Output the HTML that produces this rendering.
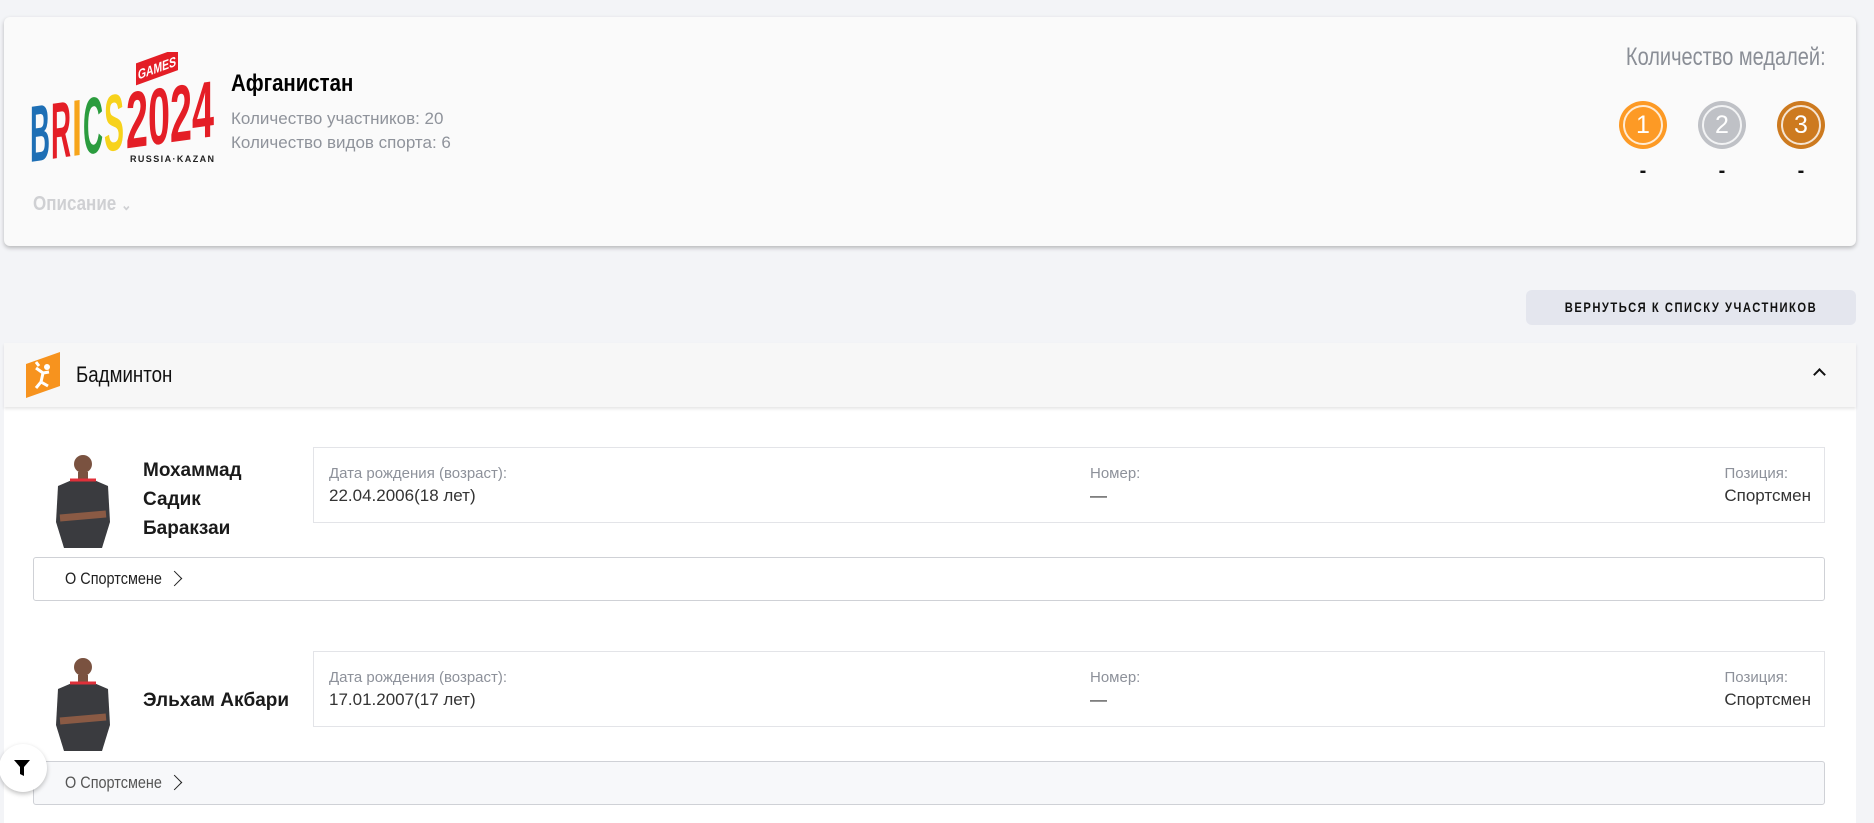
<!DOCTYPE html>
<html><head><meta charset="utf-8"><style>
*{margin:0;padding:0;box-sizing:border-box}
body{width:1874px;height:823px;overflow:hidden;background:#f3f4f7;font-family:"Liberation Sans",sans-serif;position:relative}
.abs{position:absolute}
.nar{font-family:"Liberation Sans Narrow","Liberation Sans",sans-serif;transform:scaleX(.85);transform-origin:left center;white-space:nowrap}
.card{left:4px;top:17px;width:1852px;height:229px;background:#fafafa;border-radius:6px;box-shadow:0 2px 4px rgba(0,0,0,.25)}
.medal{width:48px;height:48px;border-radius:50%;top:101px;color:#fff;font-size:25px;text-align:center;line-height:48px}
.medal:after{content:"";position:absolute;left:4px;top:4px;width:36px;height:36px;border:2px solid rgba(255,255,255,.8);border-radius:50%}
.dash{top:160px;font-weight:bold;font-size:20px;width:48px;text-align:center;color:#111}
.lbl{font-size:15px;color:#8d919a}
.val{font-size:17px;color:#333}
.box{border:1px solid #e3e4e8;background:#fff}
.about{border:1px solid #cfd1d6;border-radius:3px;height:44px}
.name{font-weight:bold;font-size:19px;color:#1a1a1a;line-height:29px}
</style></head><body>
<div class="abs card"></div>
<svg class="abs" style="left:30px;top:52px" width="186" height="114" viewBox="0 0 186 114">
<g font-family="Liberation Sans Narrow,Liberation Sans,sans-serif" font-weight="bold" font-size="80" transform="skewY(-8)">
<text x="0" y="110" fill="#1e6fb5" textLength="20" lengthAdjust="spacingAndGlyphs">B</text>
<text x="21" y="110" fill="#e41e26" textLength="20" lengthAdjust="spacingAndGlyphs">R</text>
<text x="42" y="110" fill="#f7a51b" textLength="10" lengthAdjust="spacingAndGlyphs">I</text>
<text x="53" y="110" fill="#2b9c3e" textLength="20" lengthAdjust="spacingAndGlyphs">C</text>
<text x="74" y="110" fill="#f7d21b" textLength="20" lengthAdjust="spacingAndGlyphs">S</text>
<text x="96" y="110" fill="#e41e26" textLength="88" lengthAdjust="spacingAndGlyphs">2024</text>
</g>
<g transform="skewY(-20)"><rect x="106" y="50" width="42" height="22" fill="#e41e26"/><text x="108" y="67" font-family="Liberation Sans,sans-serif" font-weight="bold" font-size="14" fill="#fff" textLength="38" lengthAdjust="spacingAndGlyphs">GAMES</text></g>
<text x="100" y="110" font-size="9" font-weight="bold" fill="#222" textLength="84" lengthAdjust="spacing">RUSSIA·KAZAN</text>
</svg>
<div class="abs nar" style="left:231px;top:70px;font-size:24px;font-weight:bold;color:#000">Афганистан</div>
<div class="abs" style="left:231px;top:107px;font-size:17px;color:#8f939b;line-height:24px">Количество участников: 20<br>Количество видов спорта: 6</div>
<div class="abs nar" style="left:33px;top:193px;font-size:20px;font-weight:bold;color:#cfd0d3">Описание <span style="font-size:15px">&#8964;</span></div>
<div class="abs nar" style="right:48px;top:43px;font-size:25px;color:#8a8e96;transform:scaleX(.8);transform-origin:right center">Количество медалей:</div>
<div class="abs medal" style="left:1619px;background:#fd9a25"><span style="position:relative">1</span></div>
<div class="abs medal" style="left:1698px;background:#bfc1c6"><span style="position:relative">2</span></div>
<div class="abs medal" style="left:1777px;background:#cd7a1f"><span style="position:relative">3</span></div>
<div class="abs dash" style="left:1619px">-</div><div class="abs dash" style="left:1698px">-</div><div class="abs dash" style="left:1777px">-</div>

<div class="abs" style="left:1526px;top:290px;width:330px;height:35px;background:#e4e6ee;border-radius:6px"></div>
<div class="abs" style="left:1526px;top:290px;width:330px;height:35px;font-size:14px;font-weight:bold;letter-spacing:1.9px;text-align:center;line-height:35px;color:#111;transform:scaleX(.8);white-space:nowrap">ВЕРНУТЬСЯ К СПИСКУ УЧАСТНИКОВ</div>

<div class="abs" style="left:4px;top:343px;width:1852px;height:480px;background:#fff"></div>
<div class="abs" style="left:4px;top:343px;width:1852px;height:64px;background:#f7f7f7;box-shadow:0 2px 3px rgba(0,0,0,.1)"></div>
<svg class="abs" style="left:26px;top:352px" width="34" height="46"><polygon points="0,12 34,0 34,34 0,46" fill="#f7931e"/><circle cx="21" cy="15" r="3" fill="#fff"/><path d="M10 16 L17 21 L23 20 M17 21 L15 30 L10 36 M15 30 L22 34 M10 10 l3 4" stroke="#fff" stroke-width="3" fill="none"/></svg>
<div class="abs nar" style="left:76px;top:362px;font-size:22px;color:#111">Бадминтон</div>
<div class="abs" style="left:1815px;top:370px;width:9px;height:9px;border-left:2px solid #111;border-top:2px solid #111;transform:rotate(45deg)"></div>

<!-- athlete 1 -->
<svg class="abs" style="left:52px;top:452px" width="62" height="96"><circle cx="31" cy="12" r="9" fill="#7a5240"/><path d="M26 20h10v10H26z" fill="#7a5240"/><path d="M6 34 L20 28 L42 28 L56 34 L58 70 L50 96 L12 96 L4 70Z" fill="#3a3b3f"/><path d="M18 28h26" stroke="#e0303a" stroke-width="3"/><path d="M8 66 L54 62" stroke="#8a5a44" stroke-width="7"/></svg>
<div class="abs name" style="left:143px;top:456px">Мохаммад<br>Садик<br>Баракзаи</div>
<div class="abs box" style="left:313px;top:447px;width:1512px;height:76px"></div>
<div class="abs lbl" style="left:329px;top:465px">Дата рождения (возраст):</div>
<div class="abs val" style="left:329px;top:486px">22.04.2006(18 лет)</div>
<div class="abs lbl" style="left:1090px;top:465px">Номер:</div>
<div class="abs val" style="left:1090px;top:486px">—</div>
<div class="abs lbl" style="right:86px;top:465px">Позиция:</div>
<div class="abs val" style="right:63px;top:486px">Спортсмен</div>
<div class="abs about" style="left:33px;top:557px;width:1792px;background:#fff"></div>
<div class="abs nar" style="left:65px;top:569px;font-size:17px;color:#222">О Спортсмене</div>
<div class="abs" style="left:169px;top:573px;width:11px;height:11px;border-right:1.5px solid #222;border-top:1.5px solid #222;transform:rotate(45deg)"></div>

<!-- athlete 2 -->
<svg class="abs" style="left:52px;top:655px" width="62" height="96"><circle cx="31" cy="12" r="9" fill="#7a5240"/><path d="M26 20h10v10H26z" fill="#7a5240"/><path d="M6 34 L20 28 L42 28 L56 34 L58 70 L50 96 L12 96 L4 70Z" fill="#3a3b3f"/><path d="M18 28h26" stroke="#e0303a" stroke-width="3"/><path d="M8 66 L54 62" stroke="#8a5a44" stroke-width="7"/></svg>
<div class="abs name" style="left:143px;top:686px">Эльхам Акбари</div>
<div class="abs box" style="left:313px;top:651px;width:1512px;height:76px"></div>
<div class="abs lbl" style="left:329px;top:669px">Дата рождения (возраст):</div>
<div class="abs val" style="left:329px;top:690px">17.01.2007(17 лет)</div>
<div class="abs lbl" style="left:1090px;top:669px">Номер:</div>
<div class="abs val" style="left:1090px;top:690px">—</div>
<div class="abs lbl" style="right:86px;top:669px">Позиция:</div>
<div class="abs val" style="right:63px;top:690px">Спортсмен</div>
<div class="abs about" style="left:33px;top:761px;width:1792px;background:#f7f8fa"></div>
<div class="abs nar" style="left:65px;top:773px;font-size:17px;color:#555">О Спортсмене</div>
<div class="abs" style="left:169px;top:777px;width:11px;height:11px;border-right:1.5px solid #222;border-top:1.5px solid #222;transform:rotate(45deg)"></div>

<div class="abs" style="left:-1px;top:744px;width:48px;height:48px;border-radius:50%;background:#fff;box-shadow:0 2px 5px rgba(0,0,0,.25)"></div>
<svg class="abs" style="left:13px;top:759px" width="20" height="20"><path d="M1 1h16l-6 7v9l-4-2V8z" fill="#000"/></svg>
</body></html>
